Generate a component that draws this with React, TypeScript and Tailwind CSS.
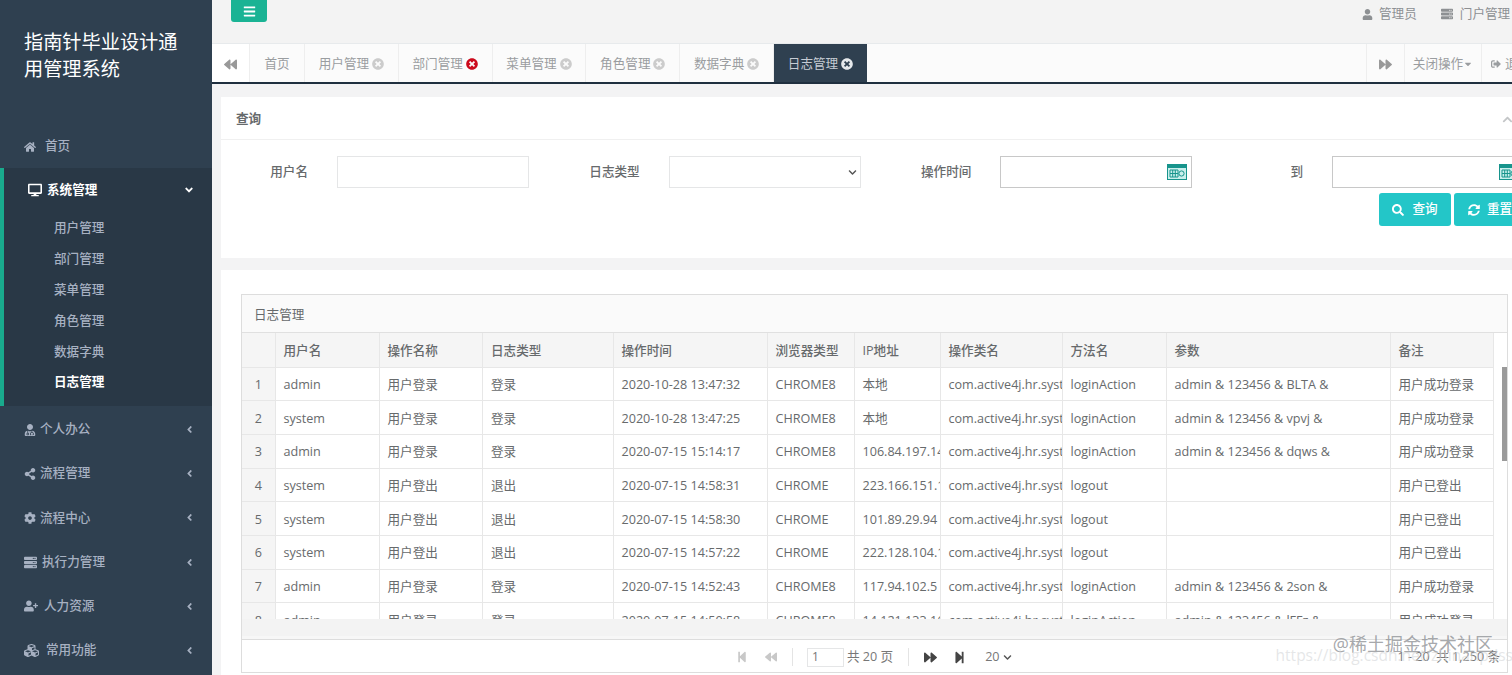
import type { ReactNode } from 'react'
import {
  FaAngleDown,
  FaAngleLeft,
  FaBackward,
  FaBars,
  FaChevronDown,
  FaChevronUp,
  FaCog,
  FaCubes,
  FaDesktop,
  FaForward,
  FaHome,
  FaSearch,
  FaServer,
  FaShareAlt,
  FaSignOutAlt,
  FaStepBackward,
  FaStepForward,
  FaSyncAlt,
  FaTimesCircle,
  FaUser,
  FaUserMd,
  FaUserPlus,
  FaCaretDown,
} from 'react-icons/fa'

const subMenus = ['用户管理', '部门管理', '菜单管理', '角色管理', '数据字典', '日志管理']

const menus = [
  { icon: <FaUserMd size={12} />, label: '个人办公', gap: 'gap-[4px]' },
  { icon: <FaShareAlt size={12} />, label: '流程管理', gap: 'gap-[4px]' },
  { icon: <FaCog size={12} />, label: '流程中心', gap: 'gap-[4px]' },
  { icon: <FaServer size={13} />, label: '执行力管理', gap: 'gap-[5px]' },
  { icon: <FaUserPlus size={14} />, label: '人力资源', gap: 'gap-[6px]' },
  { icon: <FaCubes size={15} />, label: '常用功能', gap: 'gap-[7px]' },
]

const tabs = [
  { label: '用户管理', close: 'text-[#cccccc]' },
  { label: '部门管理', close: 'text-[#cc0a1c]' },
  { label: '菜单管理', close: 'text-[#cccccc]' },
  { label: '角色管理', close: 'text-[#cccccc]' },
  { label: '数据字典', close: 'text-[#cccccc]' },
]

const columns = [
  { title: '', width: 'w-[33px]' },
  { title: '用户名', width: 'w-[104px]' },
  { title: '操作名称', width: 'w-[103.5px]' },
  { title: '日志类型', width: 'w-[130.5px]' },
  { title: '操作时间', width: 'w-[154px]' },
  { title: '浏览器类型', width: 'w-[87px]' },
  { title: 'IP地址', width: 'w-[86px]' },
  { title: '操作类名', width: 'w-[122px]' },
  { title: '方法名', width: 'w-[104px]' },
  { title: '参数', width: 'w-[224px]' },
  { title: '备注', width: 'w-[103px]' },
]

const loginRow = (user: string, time: string, ip: string, code: string) => [
  user, '用户登录', '登录', time, 'CHROME8', ip, 'com.active4j.hr.system', 'loginAction',
  `admin & 123456 & ${code} &`, '用户成功登录',
]
const logoutRow = (time: string, ip: string) => [
  'system', '用户登出', '退出', time, 'CHROME', ip, 'com.active4j.hr.system', 'logout', '', '用户已登出',
]

const rows = [
  loginRow('admin', '2020-10-28 13:47:32', '本地', 'BLTA'),
  loginRow('system', '2020-10-28 13:47:25', '本地', 'vpvj'),
  loginRow('admin', '2020-07-15 15:14:17', '106.84.197.146', 'dqws'),
  logoutRow('2020-07-15 14:58:31', '223.166.151.19'),
  logoutRow('2020-07-15 14:58:30', '101.89.29.94'),
  logoutRow('2020-07-15 14:57:22', '222.128.104.19'),
  loginRow('admin', '2020-07-15 14:52:43', '117.94.102.5', '2son'),
  loginRow('admin', '2020-07-15 14:50:58', '14.121.133.166', 'lFFz'),
]

function CalendarIcon() {
  return (
    <svg width="20" height="16" viewBox="0 0 20 16" className="shrink-0">
      <rect width="20" height="16" fill="#17948c" />
      <rect x="1" y="4" width="18" height="11" fill="#c9efec" />
      <path d="M3 6h8v7H3zM5.7 6v7M8.3 6v7M3 9.5h8" fill="none" stroke="#17948c" />
      <circle cx="14.5" cy="9.5" r="2.6" fill="none" stroke="#17948c" />
    </svg>
  )
}

function SearchField({ label, children }: { label: string; children: ReactNode }) {
  return (
    <div className="flex items-center">
      <div className="w-[116px] shrink-0 pr-[29px] text-right font-medium text-[#676a6c]">{label}</div>
      {children}
    </div>
  )
}

function DateInput() {
  return (
    <div className="flex h-8 w-[192px] shrink-0 items-center justify-end border border-[#c8c8c8] bg-white pr-[4px]">
      <CalendarIcon />
    </div>
  )
}

export default function App() {
  return (
    <div className="flex h-[675px] w-[1512px] overflow-hidden bg-[#f3f3f4] font-['Open_Sans','Noto_Sans_CJK_SC',sans-serif] text-[12.6px] text-[#676a6c]">
      <aside className="flex w-[212px] shrink-0 flex-col bg-[#2f4050] text-[#a7b1c2]">
        <div className="h-[124px] px-6 pt-[28px] text-[19.2px] leading-[27px] text-white">指南针毕业设计通用管理系统</div>
        <div className="flex h-11 items-center gap-[9px] pl-6 pt-px font-medium">
          <FaHome size={12} />
          <span>首页</span>
        </div>
        <div className="h-[238px] border-l-4 border-[#19aa8d] bg-[#293846]">
          <div className="flex h-11 items-center pl-[24px] pr-[17px] font-semibold text-white">
            <FaDesktop size={14} />
            <span className="ml-[5px] flex-1">系统管理</span>
            <FaAngleDown size={12} />
          </div>
          <div className="pt-[1.5px]">
            {subMenus.map((name) => (
              <div
                key={name}
                className={`flex h-[30.8px] items-center pl-[50px] ${name === '日志管理' ? 'font-semibold text-white' : 'font-medium'}`}
              >
                {name}
              </div>
            ))}
          </div>
        </div>
        <div className="pt-[1.5px]">
          {menus.map((m) => (
            <div key={m.label} className={`flex h-[44.2px] items-center pl-6 pr-[17px] font-medium ${m.gap}`}>
              {m.icon}
              <span className="flex-1">{m.label}</span>
              <FaAngleLeft size={11} />
            </div>
          ))}
        </div>
      </aside>

      <main className="flex min-w-0 flex-1 flex-col">
        <header className="flex h-11 shrink-0 items-start justify-between overflow-hidden border-b border-[#e7eaec] bg-[#f3f3f3] pl-[19px]">
          <button className="flex h-[22px] w-[36px] items-center justify-center rounded-b-[3px] bg-[#1ab394] text-white">
            <FaBars size={13} />
          </button>
          <div className="flex h-[28px] w-[150px] shrink-0 items-center whitespace-nowrap text-[#8d9093]">
            <FaUser size={11} />
            <span className="ml-[6px]">管理员</span>
            <FaServer size={12} className="ml-[24px]" />
            <span className="ml-[7px]">门户管理</span>
          </div>
        </header>

        <nav className="flex h-[40px] shrink-0 border-b-2 border-[#1f2f3f] bg-[#fbfbfb] text-[#9a9da0]">
          <div className="flex w-[38px] items-center justify-center border-r border-[#eeeeee] bg-white pt-[2px] text-[#999999]">
            <FaBackward size={13} />
          </div>
          <div className="flex w-[55px] items-center justify-center border-r border-[#eeeeee] pt-[2px]">首页</div>
          {tabs.map((t) => (
            <div key={t.label} className="flex w-[93.8px] items-center justify-center gap-[3px] border-r border-[#eeeeee] pt-[2px]">
              {t.label}
              <FaTimesCircle size={12} className={t.close} />
            </div>
          ))}
          <div className="flex w-[93px] items-center justify-center gap-[3px] bg-[#2f4050] pt-[2px] text-[#c6ccd4]">
            日志管理
            <FaTimesCircle size={12} className="text-[#e6e9ec]" />
          </div>
          <div className="flex-1" />
          <div className="flex w-[38px] items-center justify-center border-l border-[#eeeeee] pt-[2px] text-[#999999]">
            <FaForward size={13} />
          </div>
          <div className="flex w-[77px] items-center justify-center border-l border-[#eeeeee] pt-[2px]">
            关闭操作
            <FaCaretDown size={10} />
          </div>
          <div className="flex w-[31px] items-center overflow-hidden whitespace-nowrap border-l border-[#eeeeee] pl-[9px] pt-[2px]">
            <FaSignOutAlt size={10} className="shrink-0" />
            <span className="ml-1">退出</span>
          </div>
        </nav>

        <div className="min-h-0 flex-1 overflow-hidden pl-[9px] pt-[13px]">
          <section className="h-[161px] w-[1310px] bg-white">
            <div className="flex h-[43px] items-center justify-between border-b border-[#f0f0f0] pl-[15px] pr-[18px] pt-[3px] font-semibold">
              查询
              <FaChevronUp size={11} className="text-[#c4c6c8]" />
            </div>
            <div className="grid w-[1327px] grid-cols-[repeat(4,331.67px)] pt-[16px]">
              <SearchField label="用户名">
                <div className="h-8 w-[192px] shrink-0 border border-[#e5e6e7] bg-white" />
              </SearchField>
              <SearchField label="日志类型">
                <div className="flex h-8 w-[192px] shrink-0 items-center justify-end border border-[#e5e6e7] bg-white pr-[3px]">
                  <FaChevronDown size={9} className="text-[#555555]" />
                </div>
              </SearchField>
              <SearchField label="操作时间">
                <DateInput />
              </SearchField>
              <SearchField label="到">
                <DateInput />
              </SearchField>
            </div>
            <div className="ml-[1158px] mt-[5px] flex gap-[3px] font-medium text-white">
              <button className="flex h-[33px] w-[72px] items-center justify-center gap-[8px] rounded-[3px] bg-[#23c6c8]">
                <FaSearch size={12} />
                查询
              </button>
              <button className="flex h-[33px] w-[72px] items-center justify-center gap-[7px] rounded-[3px] bg-[#23c6c8]">
                <FaSyncAlt size={12} />
                重置
              </button>
            </div>
          </section>

          <section className="mt-3 h-[405px] bg-white pl-5 pt-6">
            <div className="relative flex h-[379px] w-[1267px] flex-col border border-[#dddddd]">
              <div className="flex h-[38px] shrink-0 items-center border-b border-[#e0e0e0] bg-[#fafafa] pl-3 pt-[4px]">日志管理</div>
              <div className="flex h-[286px] shrink-0 overflow-hidden">
                <table className="w-[1251px] shrink-0 table-fixed border-collapse">
                  <colgroup>
                    {columns.map((c) => (
                      <col key={c.title} className={c.width} />
                    ))}
                  </colgroup>
                  <thead>
                    <tr className="h-[34px] bg-[#f5f5f5]">
                      {columns.map((c) => (
                        <th key={c.title} className="border border-t-0 border-l-0 border-[#e7e7e7] px-2 pt-[3px] text-left font-medium">
                          {c.title}
                        </th>
                      ))}
                    </tr>
                  </thead>
                  <tbody>
                    {rows.map((row, i) => (
                      <tr key={i} className="h-[33.7px]">
                        <td className="border-r border-b border-[#e7e7e7] bg-[#f5f5f5] pt-[3px] text-center">{i + 1}</td>
                        {row.map((cell, j) => (
                          <td key={j} className="overflow-hidden whitespace-nowrap border-r border-b border-[#e7e7e7] px-2 pt-[3px]">
                            {cell}
                          </td>
                        ))}
                      </tr>
                    ))}
                  </tbody>
                </table>
                <div className="flex-1 pl-[8px] pt-[34px]">
                  <div className="h-[94px] w-[6px] bg-[#9a9a9a]" />
                </div>
              </div>
              <div className="h-[17px] shrink-0 bg-[#f3f3f3]" />
              <div className="h-[4px] shrink-0 border-b border-[#dddddd] bg-[#f7f7f7]" />
              <div className="flex min-h-0 flex-1 items-center pl-[494px] pt-[2px] text-[#777777]">
                <FaStepBackward size={12} className="text-[#c8c8c8]" />
                <FaBackward size={12} className="ml-[17px] text-[#c8c8c8]" />
                <div className="ml-[15px] h-[18px] w-px bg-[#e4e4e4]" />
                <div className="ml-[14px] flex h-[19px] w-[37px] items-center border border-[#e5e6e7] pl-[4px] text-[12px]">1</div>
                <span className="ml-[3px] whitespace-nowrap">共 20 页</span>
                <div className="ml-[15px] h-[18px] w-px bg-[#e4e4e4]" />
                <FaForward size={13} className="ml-[15px] text-[#444444]" />
                <FaStepForward size={13} className="ml-[16px] text-[#444444]" />
                <span className="ml-[19px]">20</span>
                <FaChevronDown size={9} className="ml-[3px] text-[#555555]" />
                <span className="ml-auto whitespace-nowrap pr-[7px]">1 - 20&nbsp; 共 1,250 条</span>
              </div>
              <div className="absolute bottom-[19px] right-[14px] whitespace-nowrap text-[18px] leading-none text-[#8f9296]/80">
                @稀土掘金技术社区
              </div>
              <div className="absolute bottom-[9px] right-[-6px] whitespace-nowrap text-[15.5px] leading-none text-[#d4d6d8]/60">
                https://blog.csdn.net/zhinanpdss
              </div>
            </div>
          </section>
        </div>
      </main>
    </div>
  )
}
